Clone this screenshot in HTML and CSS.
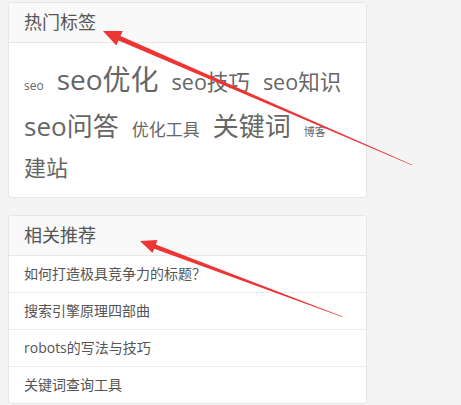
FILE: index.html
```html
<!DOCTYPE html>
<html lang="zh-CN">
<head>
<meta charset="utf-8">
<title>侧边栏</title>
<link rel="stylesheet" href="styles.css">
</head>
<body>
<div class="page">
  <section class="card">
    <h3 class="card-title">热门标签</h3>
    <div class="tag-cloud">
      <a class="tag s12">seo</a>
      <a class="tag s28">seo优化</a>
      <a class="tag s21">seo技巧</a>
      <a class="tag s21">seo知识</a>
      <a class="tag s26">seo问答</a>
      <a class="tag s17">优化工具</a>
      <a class="tag s26">关键词</a>
      <a class="tag s11">博客</a>
      <a class="tag s22">建站</a>
    </div>
  </section>
  <section class="card card-related">
    <h3 class="card-title">相关推荐</h3>
    <ul class="post-list">
      <li class="post-item">如何打造极具竞争力的标题？</li>
      <li class="post-item">搜索引擎原理四部曲</li>
      <li class="post-item">robots的写法与技巧</li>
      <li class="post-item">关键词查询工具</li>
    </ul>
  </section>
  <svg class="annotations" width="461" height="405" viewBox="0 0 461 405">
    <polygon fill="#ee3535" points="103,31 122.7,30.9 120.5,35.9 412.1,164.7 411.9,165.3 118.5,40.5 116.3,45.5"/>
    <polygon fill="#ee3535" points="140,241 157.5,240.0 155.8,244.5 343.1,316.7 342.9,317.3 154.2,248.7 152.5,253.1"/>
  </svg>
</div>
</body>
</html>
```

FILE: styles.css
```css
html, body {
  margin: 0;
  padding: 0;
  background: #f4f4f4;
}
body {
  font-family: "Open Sans", "Noto Sans CJK SC", sans-serif;
  color: #555;
}
.page {
  position: relative;
  width: 461px;
  height: 405px;
  padding: 2px 8px 0;
  box-sizing: border-box;
  overflow: hidden;
}
.card {
  width: 359px;
  background: #fff;
  border: 1px solid #e6e6e6;
  border-radius: 3px;
  box-sizing: border-box;
}
.card-related {
  margin-top: 17px;
}
.card-title {
  margin: 0;
  height: 39px;
  line-height: 39px;
  padding: 0 15px;
  font-size: 18px;
  font-weight: normal;
  color: #555;
  background: #f9f9f9;
  border-bottom: 1px solid #e6e6e6;
  border-radius: 3px 3px 0 0;
}
.tag-cloud {
  display: flex;
  flex-wrap: wrap;
  align-items: baseline;
  column-gap: 13px;
  padding: 13px 15px 10px;
  height: 154px;
  box-sizing: border-box;
}
.tag {
  color: #666;
  white-space: nowrap;
  line-height: 1.7;
}
.s11 { font-size: 11px; }
.s12 { font-size: 12px; }
.s17 { font-size: 17px; }
.s21 { font-size: 21.5px; }
.s22 { font-size: 22px; }
.s26 { font-size: 26px; }
.s28 { font-size: 28px; }
.post-list {
  list-style: none;
  margin: 0;
  padding: 0;
}
.post-item {
  height: 36px;
  line-height: 36px;
  padding: 0 15px;
  font-size: 14px;
  color: #555;
  border-top: 1px solid #ececec;
}
.post-item:first-child {
  border-top: none;
}
.annotations {
  position: absolute;
  left: 0;
  top: 0;
  pointer-events: none;
}
```
